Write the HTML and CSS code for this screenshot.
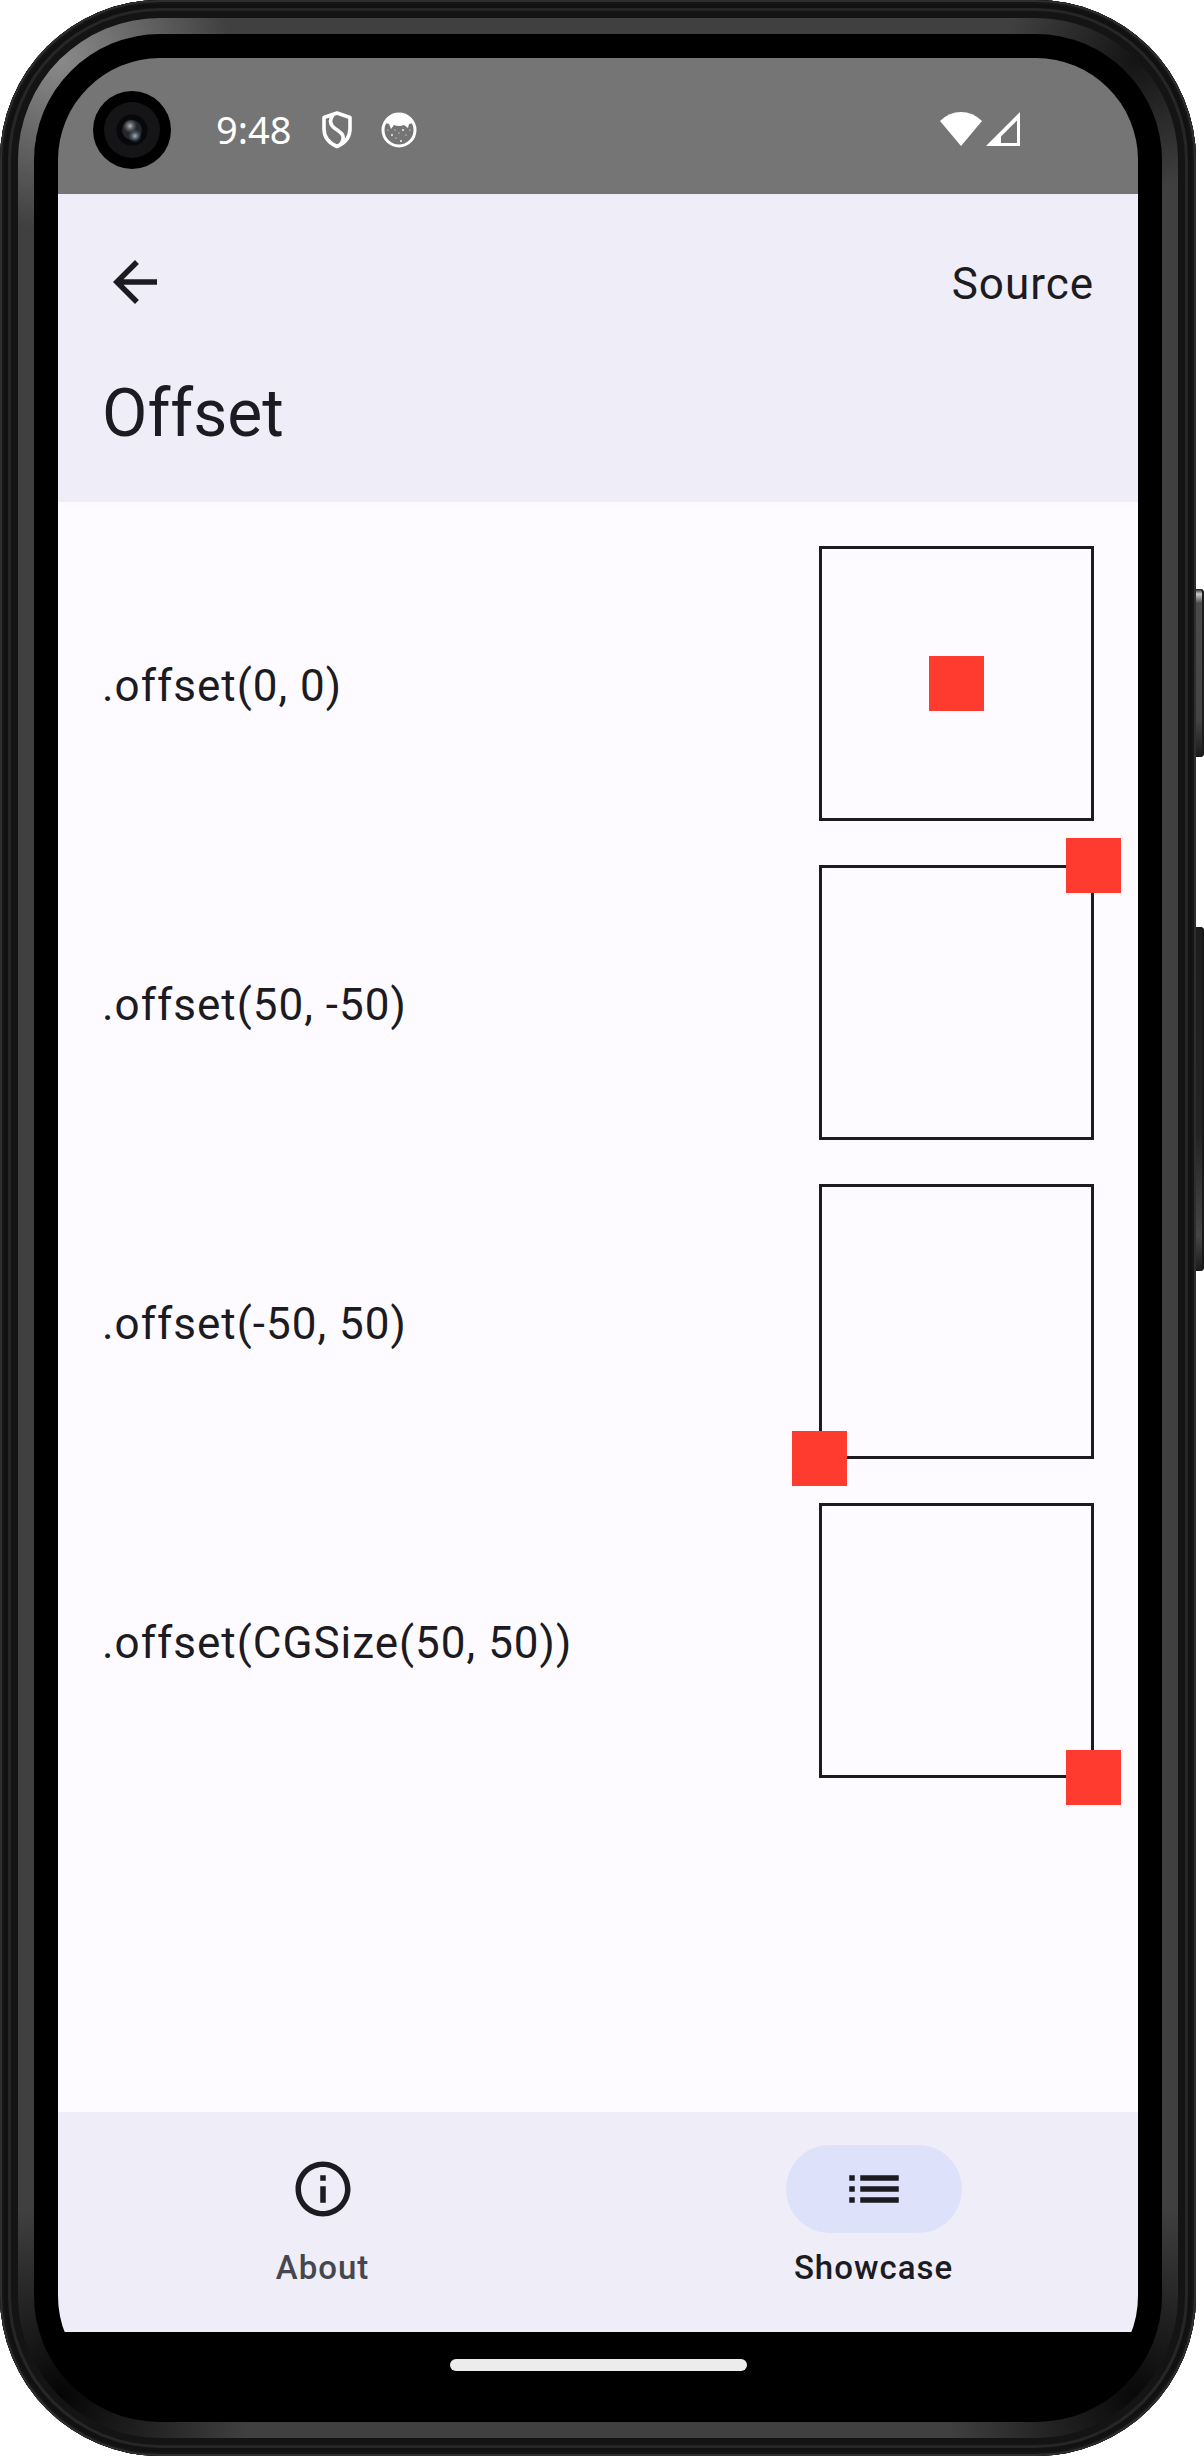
FILE: index.html
```html
<!DOCTYPE html>
<html lang="en">
<head>
<meta charset="utf-8">
<meta name="viewport" content="width=device-width, initial-scale=1">
<title>Offset</title>
<link rel="stylesheet" href="styles.css">
</head>
<body>
<div class="device">
  <span class="key key-power"></span>
  <span class="key key-volume"></span>
  <div class="rim">
    <div class="band">
      <div class="bezel">
        <div class="screen">
          <header class="status-bar">
            <svg class="camera" viewBox="0 0 78 78" aria-hidden="true">
              <defs>
                <radialGradient id="lensA"><stop offset="0" stop-color="#b9b9bb"/><stop offset="1" stop-color="#77777a" stop-opacity="0"/></radialGradient>
                <radialGradient id="lensB"><stop offset="0" stop-color="#9fb6c0"/><stop offset="1" stop-color="#4f5b62" stop-opacity="0"/></radialGradient>
              </defs>
              <circle cx="39" cy="39" r="39" fill="#000"/>
              <circle cx="39" cy="39" r="28" fill="#151517"/>
              <circle cx="39" cy="39" r="15.500" fill="#08080a"/>
              <circle cx="39" cy="39" r="10" fill="#23272c"/>
              <circle cx="37" cy="35" r="7" fill="url(#lensA)"/>
              <circle cx="42" cy="45" r="7" fill="url(#lensB)"/>
            </svg>
            <span class="clock">9:48</span>
            <svg class="status-icon shield" viewBox="0 0 32 38" aria-hidden="true">
              <g fill="none" stroke="#fff" stroke-width="3.600" stroke-linejoin="round">
                <path d="M16 2 L29 6.500 V18 C29 26 24 32 16 35.500 C8 32 3 26 3 18 V6.500 Z"/>
                <path d="M12 4 C8 9 9 14 14 17.500 C21 22 25 25 20 33"/>
              </g>
            </svg>
            <svg class="status-icon cat" viewBox="0 0 36 36" aria-hidden="true">
              <circle cx="18" cy="18" r="16" fill="none" stroke="#fff" stroke-width="3"/>
              <path d="M4 11 Q18 -6 32 11 L28 12 L27 16 L23 13 Q18 15 13 13 L10 17 L8 12 Z" fill="#fff"/>
              <g fill="#fff"><circle cx="7" cy="18" r=".6"/><circle cx="14" cy="18" r=".6"/><circle cx="22" cy="18" r=".9"/><circle cx="29" cy="18" r=".6"/><circle cx="11" cy="23" r=".9"/><circle cx="18" cy="21" r=".6"/><circle cx="25" cy="23" r=".6"/><circle cx="15" cy="26" r=".6"/><circle cx="20" cy="29" r=".9"/></g>
            </svg>
            <span class="signals">
              <svg class="wifi" viewBox="0 0 42 34" aria-hidden="true"><path d="M0 9 Q9 0 21 0 Q33 0 42 9 L21 34 Z" fill="#fff"/></svg>
              <svg class="cell" viewBox="0 0 34 34" aria-hidden="true"><path fill-rule="evenodd" d="M34 0 V34 H0 Z M31 8.500 L15 24.500 V31 H31 Z" fill="#fff"/></svg>
            </span>
          </header>
          <div class="app-bar">
            <div class="app-bar-row">
              <button class="back" type="button" aria-label="Back">
                <svg viewBox="0 0 24 24" aria-hidden="true"><path d="M20 11H7.830l5.590-5.590L12 4l-8 8 8 8 1.410-1.410L7.830 13H20v-2z" fill="currentColor"/></svg>
              </button>
              <a class="source" href="#source">Source</a>
            </div>
            <h1 class="title">Offset</h1>
          </div>
          <main class="content">
            <div class="row"><span class="caption">.offset(0, 0)</span><div class="frame"><i class="mark"></i></div></div>
            <div class="row"><span class="caption">.offset(50, -50)</span><div class="frame"><i class="mark up-right"></i></div></div>
            <div class="row"><span class="caption">.offset(-50, 50)</span><div class="frame"><i class="mark down-left"></i></div></div>
            <div class="row"><span class="caption">.offset(CGSize(50, 50))</span><div class="frame"><i class="mark down-right"></i></div></div>
          </main>
          <nav class="tabs">
            <a class="tab" href="#about">
              <span class="pill"><svg viewBox="0 0 24 24" aria-hidden="true"><path d="M11 7h2v2h-2zm0 4h2v6h-2zm1-9C6.480 2 2 6.480 2 12s4.480 10 10 10 10-4.480 10-10S17.520 2 12 2zm0 18c-4.410 0-8-3.590-8-8s3.590-8 8-8 8 3.590 8 8-3.590 8-8 8z" fill="currentColor"/></svg></span>
              <span class="tab-label">About</span>
            </a>
            <a class="tab active" href="#showcase" aria-current="page">
              <span class="pill"><svg viewBox="0 0 24 24" aria-hidden="true"><path d="M3 13h2v-2H3v2zm0 4h2v-2H3v2zm0-8h2V7H3v2zm4 4h14v-2H7v2zm0 4h14v-2H7v2zM7 7v2h14V7H7z" fill="currentColor"/></svg></span>
              <span class="tab-label">Showcase</span>
            </a>
          </nav>
          <footer class="gesture-bar"><span class="handle"></span></footer>
        </div>
      </div>
    </div>
  </div>
</div>
</body>
</html>
```
FILE: styles.css
```css
* { box-sizing: border-box; }

body {
  margin: 0;
  background: #fff;
  color: #1b1b21;
  font-family: Roboto, "Liberation Sans", sans-serif;
}

a { color: inherit; text-decoration: none; }

/* Device shell */
.device {
  position: relative;
  display: flex;
  min-height: 100vh;
  padding-right: 8px;
}

.rim, .band, .bezel, .screen {
  display: flex;
  flex: 1;
  min-width: 0;
}

.rim {
  padding: 18px;
  border-radius: 160px;
  background: #1a1a1a;
  box-shadow:
    inset 0 0 0 2px #2e2e2e,
    inset 0 0 0 4px #161616,
    inset 0 0 0 8px #111,
    inset 0 0 0 11px #262626,
    inset 0 0 0 18px #141414;
}

.band {
  padding: 16px;
  border-radius: 142px;
  background:
    radial-gradient(circle at 42px 42px, #8a8a8a 0, #8a8a8a00 170px),
    radial-gradient(circle at calc(100% - 42px) 42px, #141414 0, #14141400 130px),
    radial-gradient(circle at 42px calc(100% - 42px), #050505 0, #05050500 190px),
    radial-gradient(circle at calc(100% - 42px) calc(100% - 42px), #080808 0, #08080800 190px),
    #404040;
}

.bezel {
  padding: 24px;
  border-radius: 126px;
  background: #000;
}

.screen {
  flex-direction: column;
  overflow: hidden;
  border-radius: 102px;
}

.key {
  position: absolute;
  right: 0;
  width: 8px;
  border-radius: 0 4px 4px 0;
}

.key-power {
  top: 589px;
  height: 168px;
  background: linear-gradient(#222 0, #ccc 5px, #4a4a4a 14px, #444 130px, #1a1a1a);
  box-shadow: inset -2px 0 #1c1c1c;
}

.key-volume {
  top: 927px;
  height: 344px;
  background: linear-gradient(#1c1e1c 0, #222422 60%, #454545 90%, #1a1a1a);
  box-shadow: inset -2px 0 #181818;
}

/* Status bar */
.status-bar {
  display: flex;
  align-items: center;
  height: 136px;
  padding: 8px 118px 0 35px;
  background: #757575;
  color: #fff;
}

.camera { width: 78px; height: 78px; }
.clock { margin-left: 45px; padding-bottom: 2px; font: 400 38px/46px "Noto Sans", sans-serif; }
.status-icon { height: 38px; }
.shield { width: 32px; margin-left: 30px; }
.cat { width: 36px; margin-left: 28px; }
.signals { display: flex; gap: 4px; margin-left: auto; padding-bottom: 2px; }
.wifi { width: 42px; height: 34px; }
.cell { width: 34px; height: 34px; }

/* App bar */
.app-bar {
  padding: 44px;
  background: #efedf7;
}

.app-bar-row {
  display: flex;
  align-items: center;
  justify-content: space-between;
  height: 88px;
}

.back {
  width: 66px;
  height: 66px;
  padding: 0;
  border: 0;
  background: none;
  color: inherit;
}

.back svg, .pill svg { display: block; width: 66px; height: 66px; }

.source, .caption {
  padding-top: 4px;
  font-size: 44px;
  line-height: 66px;
  letter-spacing: 1px;
}

.title {
  margin: 44px 0 0;
  font-size: 66px;
  font-weight: 400;
  line-height: 88px;
}

/* Offset samples */
.content {
  display: flex;
  flex: 1;
  flex-direction: column;
  gap: 44px;
  padding: 44px;
  background: #fdfbff;
}

.row {
  display: flex;
  align-items: center;
  justify-content: space-between;
}

.frame {
  display: grid;
  place-items: center;
  width: 275px;
  height: 275px;
  border: 3px solid #1b1b21;
}

.mark { width: 55px; height: 55px; background: #ff3b30; }
.up-right { transform: translate(137px, -137px); }
.down-left { transform: translate(-137px, 137px); }
.down-right { transform: translate(137px, 137px); }

/* Bottom navigation */
.tabs {
  display: flex;
  gap: 22px;
  height: 220px;
  padding-top: 33px;
  background: #efedf7;
}

.tab {
  display: flex;
  flex: 1;
  flex-direction: column;
  align-items: center;
  gap: 13px;
}

.pill { padding: 11px 55px; border-radius: 44px; color: #1b1b21; }
.active .pill { background: #dde1f9; }
.tab-label { color: #46464f; font-size: 33px; font-weight: 500; line-height: 44px; letter-spacing: 1px; }
.active .tab-label { color: #1b1b21; }

.gesture-bar {
  display: flex;
  align-items: center;
  justify-content: center;
  height: 66px;
  background: #000;
}

.handle { width: 297px; height: 12px; border-radius: 6px; background: #ececec; }
```
